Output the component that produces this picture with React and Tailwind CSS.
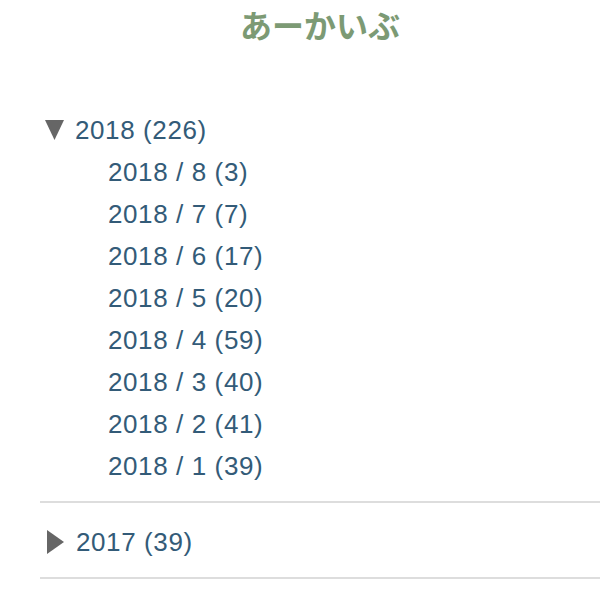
import React from "react";

const months = [
  { m: 8, n: 3 },
  { m: 7, n: 7 },
  { m: 6, n: 17 },
  { m: 5, n: 20 },
  { m: 4, n: 59 },
  { m: 3, n: 40 },
  { m: 2, n: 41 },
  { m: 1, n: 39 },
];

const Triangle = ({ open }) =>
  open ? (
    <svg width="19" height="20" viewBox="0 0 19 20" className="shrink-0">
      <polygon points="0,0 19,0 9.5,20" fill="#666" />
    </svg>
  ) : (
    <svg width="17" height="24" viewBox="0 0 17 24" className="shrink-0">
      <polygon points="0,0 17,12 0,24" fill="#666" />
    </svg>
  );

export default function App() {
  return (
    <div className="min-h-screen bg-white pl-[40px] pr-[7px] font-['Liberation_Sans',Arial,sans-serif] tracking-[0.6px] text-[#335b78]">
      <h2 className="pt-[4px] text-center text-[32px] leading-[40px] font-bold tracking-normal text-[#7c9a74] font-['Noto_Sans_CJK_JP','Liberation_Sans',sans-serif]">
        あーかいぶ
      </h2>

      <ul className="mt-[65px]">
        <li className="border-b-2 border-[#dddddd] pb-[14px]">
          <div className="flex h-[42px] items-center gap-[11px] pl-[5px] text-[26px]">
            <Triangle open />
            <span>2018 (226)</span>
          </div>
          <ul className="pl-[68px]">
            {months.map((x) => (
              <li key={x.m} className="flex h-[42px] items-center text-[26px]">
                2018 / {x.m} ({x.n})
              </li>
            ))}
          </ul>
        </li>
        <li className="border-b-2 border-[#dddddd] pt-[21px] pb-[17px]">
          <div className="flex h-[36px] items-center gap-[12px] pl-[7px] text-[26px]">
            <Triangle />
            <span>2017 (39)</span>
          </div>
        </li>
      </ul>
    </div>
  );
}
